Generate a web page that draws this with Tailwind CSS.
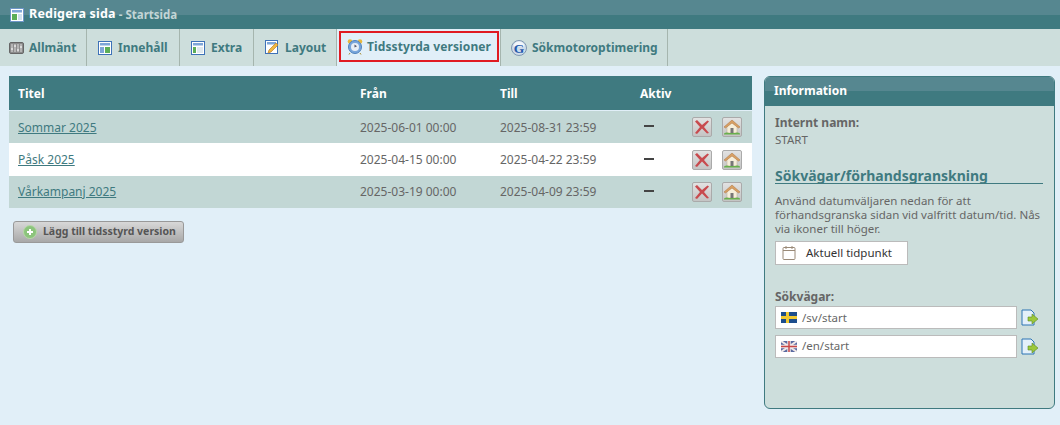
<!DOCTYPE html>
<html lang="sv"><head><meta charset="utf-8"><script src="https://cdn.jsdelivr.net/npm/@tailwindcss/browser@4"></script></head>
<body class="w-[1060px] h-[425px] overflow-hidden bg-[#e1eff8] font-['Noto_Sans','DejaVu_Sans',sans-serif] text-[12px] text-[#666]">
<header class="h-[29px] flex items-center pl-[10px] gap-[5px] bg-[linear-gradient(#568790_0,#568790_15px,#3f7a80_15px)] text-white">
  <svg width="14" height="14" viewBox="0 0 14 14"><rect x=".5" y=".5" width="13" height="13" fill="#fff" stroke="#6f96c8"/><rect x="2" y="2" width="10" height="2.500" fill="#7ea6d8"/><rect x="2" y="6" width="5" height="6" fill="#5cae58"/><rect x="8" y="6" width="4" height="6" fill="#cfe0ee"/></svg>
  <span class="font-bold text-[12.500px] tracking-[0.2px]">Redigera sida</span><span class="-ml-[2px] text-[11.500px] font-bold text-[#c3d5d6]">- Startsida</span>
</header>
<nav class="h-[37px] flex bg-[#cddedc] font-bold text-[12px] text-[#3f7a80]">
  <a class="flex items-center gap-[5px] w-[87px] pl-[9px] border-r border-[#a5b5ae]">
    <svg width="15" height="12" viewBox="0 0 15 12"><rect x=".5" y=".5" width="14" height="11" rx="1.500" fill="#8b8b8b" stroke="#666"/><path d="M3 2v8M6 2v8M9 2v8M12 2v8" stroke="#ddd"/><path d="M2 7h2M5 4h2M8 8h2M11 5h2" stroke="#fff"/></svg>Allmänt</a>
  <a class="flex items-center gap-[6px] w-[93px] pl-[11px] border-r border-[#a5b5ae]">
    <svg width="14" height="14" viewBox="0 0 14 14"><rect x=".5" y=".5" width="13" height="13" fill="#fff" stroke="#3e72b8"/><rect x="2" y="2" width="10" height="2.500" fill="#7ea6d8"/><rect x="2" y="6" width="4" height="6" fill="#7ea6d8"/><rect x="7" y="6" width="5" height="6" fill="#5cae58"/></svg>Innehåll</a>
  <a class="flex items-center gap-[6px] w-[74px] pl-[11px] border-r border-[#a5b5ae]">
    <svg width="14" height="14" viewBox="0 0 14 14"><rect x=".5" y=".5" width="13" height="13" fill="#fff" stroke="#3e72b8"/><rect x="2" y="2" width="10" height="2.500" fill="#7ea6d8"/><rect x="2" y="6" width="3" height="6" fill="#5cae58"/><rect x="6" y="6" width="6" height="6" fill="#dfe8ee"/></svg>Extra</a>
  <a class="flex items-center gap-[5px] w-[83px] pl-[11px] border-r border-[#a5b5ae]">
    <svg width="15" height="15" viewBox="0 0 15 15"><rect x=".5" y=".5" width="12" height="13" fill="#fff" stroke="#3e72b8"/><rect x="2" y="2" width="9" height="2.500" fill="#7ea6d8"/><path d="M3 13l1-3 7-7 2 2-7 7z" fill="#f0b840" stroke="#c08028" stroke-width=".7"/></svg>Layout</a>
  <div class="w-[164px] bg-[#e1eff8] border-r border-[#a5b5ae] pl-[2px] pt-[2px]">
    <a class="flex items-center gap-[4px] w-[160px] h-[31px] pl-[6px] border-2 border-[#e01b22]">
      <svg width="16" height="17" viewBox="0 0 16 17"><circle cx="3" cy="3.500" r="2.300" fill="#e8b83c"/><circle cx="13" cy="3.500" r="2.300" fill="#e8b83c"/><path d="M3 15l-1 1.500M13 15l1 1.500" stroke="#a88a30"/><circle cx="8" cy="9" r="6.500" fill="#78a6dc" stroke="#4f82bc"/><circle cx="8" cy="9" r="4" fill="#e7eef6"/><path d="M7.500 6.500v3l2.500-1.200z" fill="#556"/></svg>
      <span class="tracking-[0.1px]">Tidsstyrda versioner</span></a>
  </div>
  <a class="flex items-center gap-[5px] w-[167px] pl-[10px] border-r border-[#a5b5ae]">
    <svg width="16" height="16" viewBox="0 0 16 16"><circle cx="8" cy="8" r="7.500" fill="#cfdcea" stroke="#7f97b2"/><path d="M2.500 6.500a5.500 5 0 0 1 11 0z" fill="#f2f6fa"/><text x="8" y="12.500" text-anchor="middle" font-family="Liberation Serif" font-weight="700" font-size="13.500" fill="#2459ac">G</text></svg>Sökmotoroptimering</a>
</nav>
<main class="flex items-start pt-[10px] pl-[9px] gap-[12px]">
  <section class="w-[743px]">
    <table class="w-full border-collapse table-fixed">
      <thead class="bg-[#3f7a80] text-white font-bold"><tr class="h-[34px] text-left border-b border-[#e1eff8]"><th class="w-[342px] pl-[9px] pt-[2px]">Titel</th><th class="w-[140px] pl-[9px] pt-[2px]">Från</th><th class="w-[140px] pl-[9px] pt-[2px]">Till</th><th class="pl-[9px] pt-[2px]">Aktiv</th></tr></thead>
      <tbody>
        <tr class="h-[33px] bg-[#c2d7d5]"><td class="pl-[9px] pt-[2px]"><a class="underline text-[#3f7a80]">Sommar 2025</a></td><td class="pl-[9px] pt-[2px]">2025-06-01 00:00</td><td class="pl-[9px] pt-[2px]">2025-08-31 23:59</td><td><div class="flex items-center"><span class="ml-[13px] mb-[2px] w-[10px] h-[2px] bg-[#444]"></span><span class="ml-[38px] w-[20px] h-[20px] flex items-center justify-center rounded-[2px] border border-[#aaa] bg-[linear-gradient(#e2e2e2,#c4c4c4)]"><svg width="16" height="16" viewBox="0 0 16 16"><path d="M1 2.500L3 1l5 5 5.500-4.500 1.500 1L10 8l5 6-2 .5-5-5-5 5.500-2-1 5-6z" fill="#c84a4e"/></svg></span><span class="ml-[10px] w-[20px] h-[20px] flex items-center justify-center rounded-[2px] border border-[#aaa] bg-[linear-gradient(#e2e2e2,#c4c4c4)]"><svg width="18" height="18" viewBox="0 0 18 18"><path d="M4 8l5-4 5 4v7H4z" fill="#f6eeda" stroke="#b9a98c" stroke-width=".5"/><path d="M1 9l8-7 8 7-1.500 1L9 5l-6.500 5z" fill="#d9a064" stroke="#a8703c" stroke-width=".5"/><rect x="7.500" y="10" width="3" height="5" fill="#777"/><path d="M1 15.500c2-1.500 4-1 5-.5h6c1-.5 3-1 5 .5v1H1z" fill="#68b04c"/></svg></span></div></td></tr>
        <tr class="h-[33px] bg-white"><td class="pl-[9px]"><a class="underline text-[#3f7a80]">Påsk 2025</a></td><td class="pl-[9px]">2025-04-15 00:00</td><td class="pl-[9px]">2025-04-22 23:59</td><td><div class="flex items-center"><span class="ml-[13px] mb-[2px] w-[10px] h-[2px] bg-[#444]"></span><span class="ml-[38px] w-[20px] h-[20px] flex items-center justify-center rounded-[2px] border border-[#aaa] bg-[linear-gradient(#e2e2e2,#c4c4c4)]"><svg width="16" height="16" viewBox="0 0 16 16"><path d="M1 2.500L3 1l5 5 5.500-4.500 1.500 1L10 8l5 6-2 .5-5-5-5 5.500-2-1 5-6z" fill="#c84a4e"/></svg></span><span class="ml-[10px] w-[20px] h-[20px] flex items-center justify-center rounded-[2px] border border-[#aaa] bg-[linear-gradient(#e2e2e2,#c4c4c4)]"><svg width="18" height="18" viewBox="0 0 18 18"><path d="M4 8l5-4 5 4v7H4z" fill="#f6eeda" stroke="#b9a98c" stroke-width=".5"/><path d="M1 9l8-7 8 7-1.500 1L9 5l-6.500 5z" fill="#d9a064" stroke="#a8703c" stroke-width=".5"/><rect x="7.500" y="10" width="3" height="5" fill="#777"/><path d="M1 15.500c2-1.500 4-1 5-.5h6c1-.5 3-1 5 .5v1H1z" fill="#68b04c"/></svg></span></div></td></tr>
        <tr class="h-[32px] bg-[#c2d7d5]"><td class="pl-[9px]"><a class="underline text-[#3f7a80]">Vårkampanj 2025</a></td><td class="pl-[9px]">2025-03-19 00:00</td><td class="pl-[9px]">2025-04-09 23:59</td><td><div class="flex items-center"><span class="ml-[13px] mb-[2px] w-[10px] h-[2px] bg-[#444]"></span><span class="ml-[38px] w-[20px] h-[20px] flex items-center justify-center rounded-[2px] border border-[#aaa] bg-[linear-gradient(#e2e2e2,#c4c4c4)]"><svg width="16" height="16" viewBox="0 0 16 16"><path d="M1 2.500L3 1l5 5 5.500-4.500 1.500 1L10 8l5 6-2 .5-5-5-5 5.500-2-1 5-6z" fill="#c84a4e"/></svg></span><span class="ml-[10px] w-[20px] h-[20px] flex items-center justify-center rounded-[2px] border border-[#aaa] bg-[linear-gradient(#e2e2e2,#c4c4c4)]"><svg width="18" height="18" viewBox="0 0 18 18"><path d="M4 8l5-4 5 4v7H4z" fill="#f6eeda" stroke="#b9a98c" stroke-width=".5"/><path d="M1 9l8-7 8 7-1.500 1L9 5l-6.500 5z" fill="#d9a064" stroke="#a8703c" stroke-width=".5"/><rect x="7.500" y="10" width="3" height="5" fill="#777"/><path d="M1 15.500c2-1.500 4-1 5-.5h6c1-.5 3-1 5 .5v1H1z" fill="#68b04c"/></svg></span></div></td></tr>
      </tbody>
    </table>
    <button class="mt-[13px] ml-[4px] w-[171px] h-[22px] flex items-center gap-[6px] pl-[9px] rounded-[3px] border border-[#999] bg-[linear-gradient(#d8d8d8,#a8a8a8)] font-bold text-[10.500px] text-[#555]">
      <svg width="14" height="14" viewBox="0 0 14 14"><circle cx="7" cy="7" r="6.500" fill="#8cc47c" stroke="#b8d8a8"/><path d="M7 4v6M4 7h6" stroke="#fff" stroke-width="2"/></svg>Lägg till tidsstyrd version</button>
  </section>
  <aside class="w-[291px] h-[333px] rounded-[6px] border border-[#3f7a80] bg-[#cddedc] overflow-hidden">
    <h2 class="h-[29px] pl-[9px] pt-[5px] bg-[linear-gradient(#568790_0,#568790_14px,#3f7a80_14px)] text-white font-bold text-[12px]">Information</h2>
    <div class="px-[10px] pt-[8px]">
      <p class="font-bold leading-[17px] text-[#666]">Internt namn:</p>
      <p class="mt-[1px] leading-[16px] text-[11.500px]">START</p>
      <h3 class="mt-[19px] w-[268px] h-[17px] border-b border-[#3f7a80] font-bold text-[14px] leading-[18px] text-[#3f7a80]">Sökvägar/förhandsgranskning</h3>
      <p class="mt-[10px] leading-[14px] text-[11.500px]">Använd datumväljaren nedan för att förhandsgranska sidan vid valfritt datum/tid. Nås via ikoner till höger.</p>
      <div class="mt-[5px] w-[133px] h-[24px] flex items-center gap-[10px] pl-[6px] bg-white border border-[#bbb] text-[#333] text-[11.500px]">
        <svg width="14" height="16" viewBox="0 0 14 16"><rect x="1" y="2.500" width="12" height="12" rx="1" fill="none" stroke="#9a8a78"/><path d="M1 5.500h12M4 1v3M10 1v3" stroke="#9a8a78"/></svg>Aktuell tidpunkt</div>
      <p class="mt-[24px] font-bold leading-[16px] text-[#666]">Sökvägar:</p>
      <div class="mt-[1px] flex items-center gap-[4px]">
        <div class="w-[242px] h-[23px] flex items-center gap-[5px] pl-[5px] bg-white border border-[#bbb] text-[11.500px]"><svg width="16" height="11" viewBox="0 0 16 11"><rect width="16" height="11" fill="#1d4d8c"/><path d="M5 0h3v11H5zM0 4h16v3H0z" fill="#f0c830"/></svg>/sv/start</div>
        <svg width="18" height="17" viewBox="0 0 18 17"><path d="M1 1h9l3 3v12H1z" fill="#e4f0fa" stroke="#2d74b4"/><path d="M7 8h4V5l6 5-6 5v-3H7z" fill="#9cc83c" stroke="#5c8c20" stroke-width=".6"/></svg>
      </div>
      <div class="mt-[6px] flex items-center gap-[4px]">
        <div class="w-[242px] h-[23px] flex items-center gap-[5px] pl-[5px] pb-[1px] bg-white border border-[#bbb] text-[11.500px]"><svg width="16" height="11" viewBox="0 0 16 11"><rect width="16" height="11" fill="#5a6aa0"/><path d="M0 0l16 11M16 0L0 11" stroke="#f0e8e8" stroke-width="2"/><path d="M8 0v11M0 5.500h16" stroke="#f0e8e8" stroke-width="3.500"/><path d="M8 0v11M0 5.500h16" stroke="#c84848" stroke-width="1.500"/></svg>/en/start</div>
        <svg width="18" height="17" viewBox="0 0 18 17"><path d="M1 1h9l3 3v12H1z" fill="#e4f0fa" stroke="#2d74b4"/><path d="M7 8h4V5l6 5-6 5v-3H7z" fill="#9cc83c" stroke="#5c8c20" stroke-width=".6"/></svg>
      </div>
    </div>
  </aside>
</main>
</body></html>
